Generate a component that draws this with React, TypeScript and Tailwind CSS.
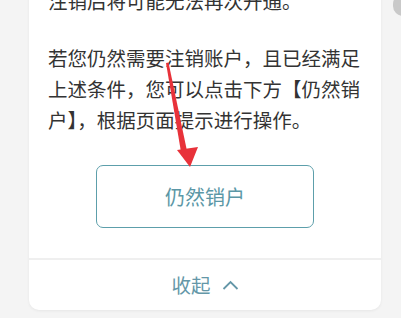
import React from "react";

export default function App() {
  return (
    <div
      className="relative w-[401px] h-[318px] overflow-hidden bg-[#f4f4f4]"
      style={{ fontFamily: '"Noto Sans CJK SC", "Noto Sans", sans-serif' }}
    >
      <div className="absolute right-[-12px] top-[-6px] w-[20px] h-[22px] rounded-full bg-[#c9c9c9]" />
      <div className="ml-[29px] w-[352px] -mt-[15px] bg-white rounded-b-[10px] shadow-[0_1px_3px_rgba(0,0,0,0.06)]">
        <div className="px-[19px] text-[19.5px] leading-[31px] text-[#333333]">
          <p>注销后将可能无法再次开通。</p>
          <p className="mt-[26px]">
            若您仍然需要注销账户，且已经满足上述条件，您可以点击下方【仍然销户】，根据页面提示进行操作。
          </p>
        </div>
        <div className="flex justify-center pt-[30px] pb-[30px]">
          <div className="w-[218px] h-[63px] rounded-[7px] border border-[#5d9fab] flex items-center justify-center text-[20px] text-[#5b97a6]">
            仍然销户
          </div>
        </div>
        <div className="border-t-2 border-[#efefef] h-[52px] flex items-center justify-center gap-[11px] text-[19.5px] text-[#6497a8]">
          <span>收起</span>
          <svg width="17" height="10" viewBox="0 0 17 10" fill="none">
            <path d="M1.5 9 L8.5 2 L15.5 9" stroke="#6497a8" strokeWidth="1.8" />
          </svg>
        </div>
      </div>
      <svg className="absolute left-0 top-0" width="401" height="318" viewBox="0 0 401 318">
        <polygon points="166,63 168.5,62.5 187,151 181,152" fill="#e8323a" />
        <polygon points="177,150 198,147 190,167" fill="#e8323a" />
      </svg>
    </div>
  );
}
